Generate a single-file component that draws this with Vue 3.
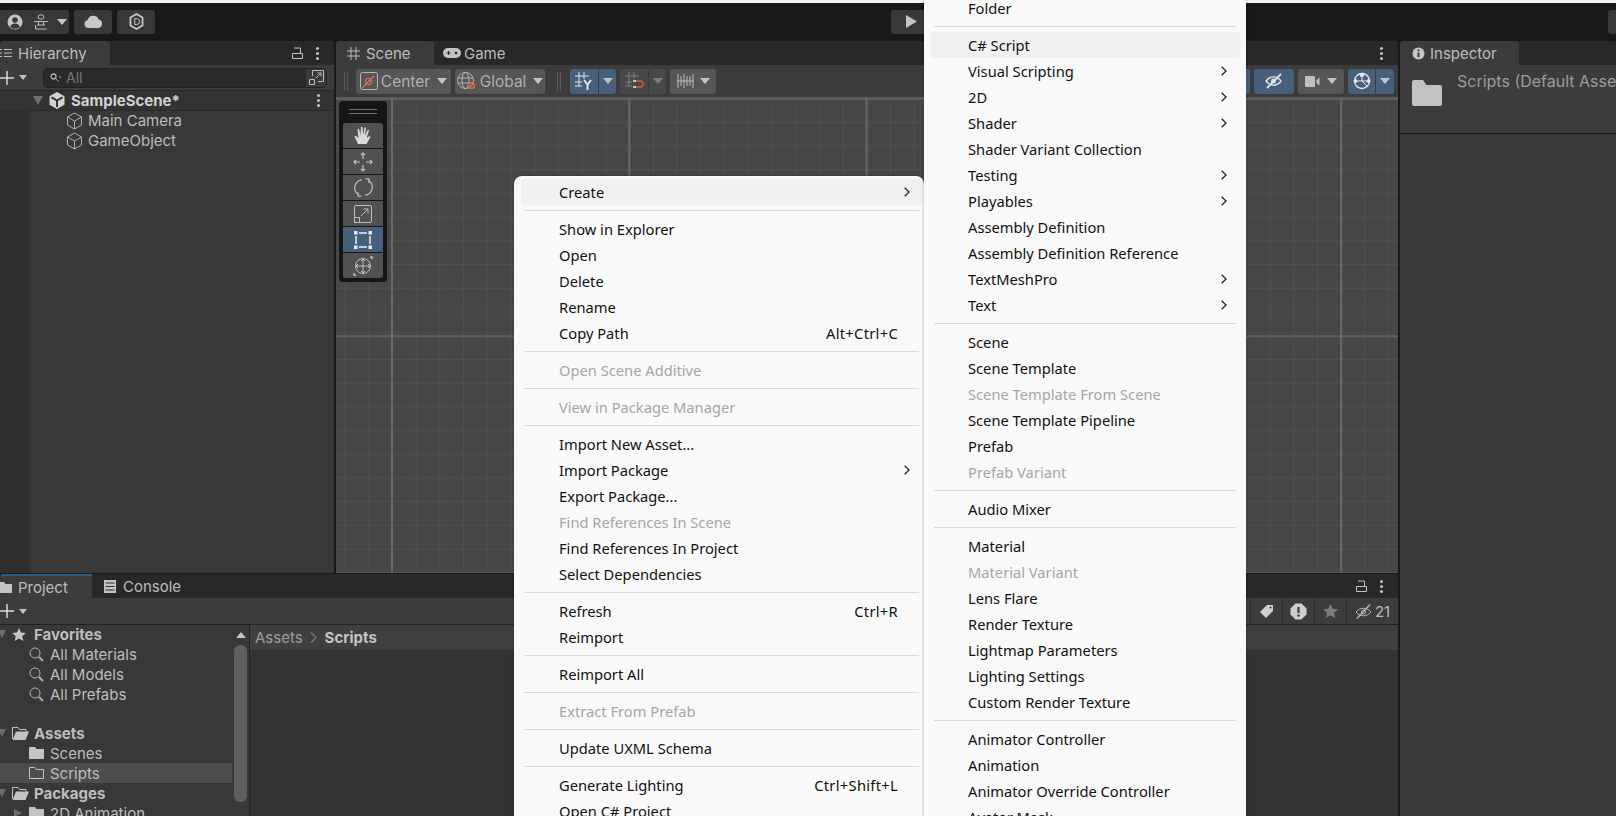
<script setup>
const mainMenu = [
  { label: 'Create', sub: true, hover: true },
  { sep: true },
  { label: 'Show in Explorer' },
  { label: 'Open' },
  { label: 'Delete' },
  { label: 'Rename' },
  { label: 'Copy Path', shortcut: 'Alt+Ctrl+C' },
  { sep: true },
  { label: 'Open Scene Additive', off: true },
  { sep: true },
  { label: 'View in Package Manager', off: true },
  { sep: true },
  { label: 'Import New Asset...' },
  { label: 'Import Package', sub: true },
  { label: 'Export Package...' },
  { label: 'Find References In Scene', off: true },
  { label: 'Find References In Project' },
  { label: 'Select Dependencies' },
  { sep: true },
  { label: 'Refresh', shortcut: 'Ctrl+R' },
  { label: 'Reimport' },
  { sep: true },
  { label: 'Reimport All' },
  { sep: true },
  { label: 'Extract From Prefab', off: true },
  { sep: true },
  { label: 'Update UXML Schema' },
  { sep: true },
  { label: 'Generate Lighting', shortcut: 'Ctrl+Shift+L' },
  { label: 'Open C# Project' }
]

const createMenu = [
  { label: 'Folder' },
  { sep: true },
  { label: 'C# Script', hover: true },
  { label: 'Visual Scripting', sub: true },
  { label: '2D', sub: true },
  { label: 'Shader', sub: true },
  { label: 'Shader Variant Collection' },
  { label: 'Testing', sub: true },
  { label: 'Playables', sub: true },
  { label: 'Assembly Definition' },
  { label: 'Assembly Definition Reference' },
  { label: 'TextMeshPro', sub: true },
  { label: 'Text', sub: true },
  { sep: true },
  { label: 'Scene' },
  { label: 'Scene Template' },
  { label: 'Scene Template From Scene', off: true },
  { label: 'Scene Template Pipeline' },
  { label: 'Prefab' },
  { label: 'Prefab Variant', off: true },
  { sep: true },
  { label: 'Audio Mixer' },
  { sep: true },
  { label: 'Material' },
  { label: 'Material Variant', off: true },
  { label: 'Lens Flare' },
  { label: 'Render Texture' },
  { label: 'Lightmap Parameters' },
  { label: 'Lighting Settings' },
  { label: 'Custom Render Texture' },
  { sep: true },
  { label: 'Animator Controller' },
  { label: 'Animation' },
  { label: 'Animator Override Controller' },
  { label: 'Avatar Mask' }
]

const menus = [
  { id: 'menu-main', items: mainMenu },
  { id: 'menu-create', items: createMenu }
]

const favorites = ['All Materials', 'All Models', 'All Prefabs']
</script>

<template>
  <div class="editor">
    <div class="strip"></div>

    <header class="topbar">
      <div class="top-btn account">
        <svg width="16" height="16" viewBox="0 0 16 16"><circle cx="8" cy="8" r="7.5" fill="#c4c4c4"/><circle cx="8" cy="6" r="2.8" fill="#383838"/><path d="M3 13c1-3 3-3.6 5-3.6s4 .6 5 3.6c-3 2.4-7 2.4-10 0z" fill="#383838"/></svg>
        <svg class="layers" width="14" height="16" viewBox="0 0 14 16" fill="none" stroke="#bdbdbd"><ellipse cx="7" cy="3" rx="3" ry="2.2"/><path d="M0 7.5h14M3 11h8M4.500 7.500V11M9.500 7.500V11M1.500 15h11M1.500 11v4"/></svg>
        <i class="caret"></i>
      </div>
      <div class="top-btn cloud">
        <svg width="19" height="13" viewBox="0 0 19 13"><path d="M4.500 13a4 4 0 0 1-.8-7.900A5.800 5.800 0 0 1 14.800 4.600 4.300 4.300 0 0 1 14.500 13z" fill="#c8c8c8"/></svg>
      </div>
      <div class="top-btn hexa">
        <svg width="15" height="17" viewBox="0 0 15 17" fill="none"><path d="M7.500 1l6 3.500v8l-6 3.500-6-3.500v-8z" stroke="#c8c8c8" stroke-width="1.800"/><path d="M5.800 5.500h1.800a3 3 0 0 1 0 6H5.800z" stroke="#c8c8c8"/></svg>
      </div>
      <div class="top-btn play">
        <svg width="11" height="13" viewBox="0 0 11 13"><path d="M0 0l11 6.500L0 13z" fill="#c4c4c4"/></svg>
      </div>
      <div class="top-btn end"></div>
    </header>

    <div class="workspace">
      <div class="left-stack">
        <div class="upper">
          <section class="panel hierarchy">
            <div class="tabbar">
              <div class="tab hier-tab">
                <svg width="12" height="10" viewBox="0 0 12 10" stroke="#bdbdbd"><path d="M0 1.500h2M0 5h2M0 8.500h2M4 1.500h8M4 5h8M4 8.500h8"/></svg>
                <span>Hierarchy</span>
              </div>
              <div class="tab-tools">
                <svg class="lock" width="11" height="12" viewBox="0 0 11 12" fill="none" stroke="#c4c4c4"><path d="M.5 6.500h10v5H.5zM2 1h6.500v5.500"/></svg>
                <i class="dots"></i>
              </div>
            </div>
            <div class="hier-bar">
              <svg class="plus" width="14" height="14" viewBox="0 0 14 14" stroke="#d8d8d8" stroke-width="1.500"><path d="M0 7h14M7 0v14"/></svg>
              <i class="caret"></i>
              <div class="search">
                <svg width="12" height="10" viewBox="0 0 12 10" fill="none" stroke="#b0b0b0"><circle cx="3.500" cy="3.500" r="2.500" stroke-width="1.300"/><path d="M5.500 5.500L8.500 8.500M9 4h2"/></svg>
                <span>All</span>
                <div class="search-end">
                  <svg width="15" height="15" viewBox="0 0 15 15" fill="none" stroke="#bcbcbc"><path d="M3.500 6V.5h11v11H9M.5 9.500h5v5h-5zM7 8l5-5M8.500 3H12v3.500"/></svg>
                </div>
              </div>
            </div>
            <div class="scene-row">
              <i class="tri-down"></i>
              <svg class="unity" width="16" height="17" viewBox="0 0 16 17"><path d="M8 0l7.500 4.300v8.400L8 17 .5 12.700V4.300z" fill="#d2d2d2"/><path d="M8 8.500V15M8 8.500L2.500 5.300M8 8.500l5.500-3.200" stroke="#333" stroke-width="2"/></svg>
              <span>SampleScene*</span>
              <i class="dots"></i>
            </div>
            <div class="hier-list">
              <div v-for="name in ['Main Camera', 'GameObject']" :key="name" class="hier-item">
                <svg width="17" height="18" viewBox="0 0 17 18" fill="none" stroke="#b0b0b0"><path d="M8.500 1l7 4v8l-7 4-7-4V5zM1.500 5l7 4 7-4M8.500 9v8"/></svg>
                <span>{{ name }}</span>
              </div>
            </div>
          </section>

          <section class="panel scene">
            <div class="tabbar">
              <div class="tab scene-tab">
                <svg width="13" height="13" viewBox="0 0 13 13" stroke="#bdbdbd"><path d="M4 0v13M9 0v13M0 4h13M0 9h13"/></svg>
                <span>Scene</span>
              </div>
              <div class="tab plain game-tab">
                <svg width="18" height="10" viewBox="0 0 18 10"><rect width="18" height="10" rx="5" fill="#c4c4c4"/><path d="M3.500 5h4M5.500 3v4" stroke="#282828"/><circle cx="13" cy="5" r="1.300" fill="#282828"/></svg>
                <span>Game</span>
              </div>
              <div class="tab-tools"><i class="dots"></i></div>
            </div>
            <div class="scene-bar">
              <i class="grip"></i>
              <div class="tbtn center-btn">
                <svg width="18" height="18" viewBox="0 0 18 18" fill="none"><rect x=".5" y=".5" width="17" height="17" rx="2" stroke="#b8b8b8"/><path d="M2 16l12-12" stroke="#b8b8b8"/><circle cx="8.500" cy="9.500" r="3" stroke="#e0653a" stroke-width="1.600"/></svg>
                <span>Center</span><i class="caret"></i>
              </div>
              <div class="tbtn global-btn">
                <svg width="20" height="18" viewBox="0 0 20 18" fill="none" stroke="#b8b8b8"><circle cx="8.500" cy="8.500" r="8"/><ellipse cx="8.500" cy="8.500" rx="3.500" ry="8"/><path d="M1 6h15M1 11h15"/><circle cx="14.500" cy="13.500" r="3" stroke="#e0653a" stroke-width="1.600"/></svg>
                <span>Global</span><i class="caret"></i>
              </div>
              <i class="grip second"></i>
              <div class="tbtn blue snap-a">
                <svg width="20" height="18" viewBox="0 0 20 18" fill="none" stroke="#e2e2e2"><path d="M5 0v14M10 0v7M1 4h14M1 10h7M1 14h7"/><path d="M10 8l3.500 4.500L17 8M13.500 12v6" stroke-width="2"/></svg>
              </div>
              <div class="tbtn blue snap-b"><i class="caret"></i></div>
              <div class="tbtn dim snap-c">
                <svg width="20" height="18" viewBox="0 0 20 18" fill="none" stroke="#7e7e7e"><path d="M5 0v14M10 0v7M1 4h14M1 10h7M1 14h7"/><path d="M12 9h4a3 3 0 0 1 0 6h-4" stroke="#b0583a" stroke-width="2"/><path d="M9 9h3M9 15h3" stroke="#c4c4c4" stroke-width="2"/></svg>
              </div>
              <div class="tbtn dim snap-d"><i class="caret dark"></i></div>
              <div class="tbtn ruler-btn">
                <svg width="17" height="14" viewBox="0 0 17 14" fill="none" stroke="#bcbcbc"><path d="M0 7h17M1 0v14M4 2v10M7 0v14M10 2v10M13 2v10M16 0v14"/></svg>
                <i class="caret"></i>
              </div>
              <div class="bar-right">
                <div class="tbtn blue stub-btn"></div>
                <div class="tbtn blue eye-btn">
                  <svg width="20" height="16" viewBox="0 0 20 16" fill="none" stroke="#e2e2e2"><path d="M2 8c4-5.500 11-5.500 15 0-4 5.500-11 5.500-15 0z" stroke-width="1.400"/><path d="M3 15L17 1" stroke-width="1.800"/><circle cx="9.500" cy="8" r="2.500" fill="#e2e2e2" stroke="none"/></svg>
                </div>
                <div class="tbtn cam-btn">
                  <svg width="16" height="11" viewBox="0 0 16 11"><rect width="10" height="11" rx="1" fill="#c0c0c0"/><path d="M11.500 4l3-2.500v8l-3-2.500z" fill="#c0c0c0"/></svg>
                  <i class="caret"></i>
                </div>
                <div class="giz-group">
                  <div class="tbtn blue giz-a">
                    <svg width="18" height="18" viewBox="0 0 18 18" fill="none" stroke="#e6e6e6"><circle cx="9" cy="9" r="7.500" stroke-width="1.300"/><path d="M2 9h14M9 2v7l5 5"/><circle cx="9" cy="3" r="1.800" fill="#e6e6e6"/><circle cx="2.500" cy="9" r="1.500" fill="#e6e6e6"/><circle cx="15.500" cy="9" r="1.500" fill="#e6e6e6"/></svg>
                  </div>
                  <div class="tbtn blue giz-b"><i class="caret"></i></div>
                </div>
              </div>
            </div>
            <div class="view">
              <div class="overlay">
                <div class="overlay-grip"></div>
                <div class="tool">
                  <svg width="18" height="20" viewBox="0 0 18 20"><path d="M4 18L0.500 10.500l1.200-.8L4.500 12 3.500 3l1.500-.3L6.500 9 7 1h1.500l.7 8 1.300-7.500 1.500.3L11 9.500l2.800-5.800 1.300.6-2.500 7.700 3-2 .9 1-4 7z" fill="#dadada"/></svg>
                </div>
                <div class="tool">
                  <svg width="20" height="20" viewBox="0 0 20 20" fill="none" stroke="#c4c4c4" stroke-width="1.200"><path d="M10 1v6M10 13v6M1 10h6M13 10h6"/><path d="M8 3l2-2 2 2M8 17l2 2 2-2M3 8l-2 2 2 2M17 8l2 2-2 2"/></svg>
                </div>
                <div class="tool">
                  <svg width="19" height="19" viewBox="0 0 19 19" fill="none" stroke="#bdbdbd" stroke-width="1.200"><path d="M4.500 16.500A8 8 0 0 1 8 1.800M14.500 2.500A8 8 0 0 1 11 17.200"/><path d="M11.500 .8h3.500V5M7.500 18.200H4v-4"/></svg>
                </div>
                <div class="tool">
                  <svg width="18" height="18" viewBox="0 0 18 18" fill="none" stroke="#bdbdbd"><rect x=".5" y=".5" width="17" height="17" rx="1.500"/><rect x=".5" y="12.500" width="5" height="5"/><path d="M7 11l7-7M9.500 4H14v4.500"/></svg>
                </div>
                <div class="tool active">
                  <svg width="18" height="18" viewBox="0 0 18 18"><path d="M5 2h8M5 16h8M2 5v8M16 5v8" stroke="#eee" stroke-width="1.500"/><path d="M0 0h3.500v3.500H0zM14.500 0H18v3.500h-3.500zM0 14.500h3.500V18H0zM14.500 14.500H18V18h-3.500z" fill="#eee"/></svg>
                </div>
                <div class="tool">
                  <svg width="20" height="20" viewBox="0 0 20 20" fill="none" stroke="#bdbdbd"><circle cx="10" cy="10" r="7.500"/><path d="M10 3v14M3 10h14"/><path d="M8 5l2-2 2 2M8 15l2 2 2-2M5 8l-2 2 2 2M15 8l2 2-2 2"/><path d="M17 1h2v2M1 17v2h2" stroke-width="1.500"/></svg>
                </div>
              </div>
            </div>
          </section>
        </div>

        <section class="panel project">
          <div class="tabbar">
            <div class="tab project-tab">
              <svg width="13" height="11" viewBox="0 0 13 11"><path d="M0 0h5l1.500 2H13v9H0z" fill="#c4c4c4"/></svg>
              <span>Project</span>
            </div>
            <div class="tab plain console-tab">
              <svg width="12" height="13" viewBox="0 0 12 13"><rect width="12" height="13" fill="#c4c4c4"/><path d="M1.500 3h9M1.500 6.500h9M1.500 10h9" stroke="#282828"/></svg>
              <span>Console</span>
            </div>
            <div class="tab-tools">
              <svg class="lock" width="11" height="12" viewBox="0 0 11 12" fill="none" stroke="#c4c4c4"><path d="M.5 6.500h10v5H.5zM2 1h6.500v5.500"/></svg>
              <i class="dots"></i>
            </div>
          </div>
          <div class="project-bar">
            <svg class="plus" width="14" height="14" viewBox="0 0 14 14" stroke="#d8d8d8" stroke-width="1.500"><path d="M0 7h14M7 0v14"/></svg>
            <i class="caret small"></i>
            <div class="filter-cells">
              <div class="cell">
                <svg width="14" height="14" viewBox="0 0 14 14"><path d="M7 1h6v6l-7 7-6-6z" fill="#d0d0d0"/><circle cx="10.500" cy="3.500" r="1.100" fill="#3c3c3c"/></svg>
              </div>
              <div class="cell">
                <svg width="17" height="17" viewBox="0 0 17 17"><path d="M5.500.5h6l5 5v6l-5 5h-6l-5-5v-6z" fill="#d0d0d0"/><path d="M8.500 4v6" stroke="#3c3c3c" stroke-width="2.200"/><circle cx="8.500" cy="12.500" r="1.200" fill="#3c3c3c"/></svg>
              </div>
              <div class="cell">
                <svg width="15" height="14" viewBox="0 0 15 14"><path d="M7.500 0l2.200 4.800 5.300.5-4 3.500 1.200 5.200-4.700-2.800L2.800 14 4 8.800 0 5.300l5.300-.5z" fill="#7d7d7d"/></svg>
              </div>
              <div class="cell last">
                <svg width="18" height="15" viewBox="0 0 18 15" fill="none" stroke="#bcbcbc"><path d="M1 8c4-5 11-5 15 0-4 5-11 5-15 0z"/><path d="M2 14.500L15 .5" stroke-width="1.300"/><circle cx="8.500" cy="8" r="2"/></svg>
                <span>21</span>
              </div>
            </div>
          </div>
          <div class="project-body">
            <aside class="tree">
              <div class="tree-list">
                <div class="tree-row head fav">
                  <i class="tree-tri"></i>
                  <svg width="14" height="13" viewBox="0 0 15 14"><path d="M7.500 0l2.200 4.800 5.300.5-4 3.500 1.200 5.200-4.700-2.800L2.800 14 4 8.800 0 5.300l5.300-.5z" fill="#c4c4c4"/></svg>
                  <span>Favorites</span>
                </div>
                <div v-for="name in favorites" :key="name" class="tree-row child">
                  <svg width="15" height="15" viewBox="0 0 15 15" fill="none" stroke="#b4b4b4"><circle cx="6" cy="6" r="5"/><path d="M10 10l4 4" stroke-width="1.800"/></svg>
                  <span>{{ name }}</span>
                </div>
                <div class="tree-row spacer"></div>
                <div class="tree-row head">
                  <i class="tree-tri"></i>
                  <svg width="17" height="13" viewBox="0 0 17 13"><path d="M1 12l3-7.500h13L13.500 13H1z" fill="#c4c4c4"/><path d="M.5 12V.5h5.500l1.500 2h6.500v2" fill="none" stroke="#c4c4c4"/></svg>
                  <span>Assets</span>
                </div>
                <div class="tree-row child">
                  <svg width="15" height="12" viewBox="0 0 15 12"><path d="M0 0h6l1.500 2H15v10H0z" fill="#c4c4c4"/></svg>
                  <span>Scenes</span>
                </div>
                <div class="tree-row child selected">
                  <svg width="15" height="12" viewBox="0 0 15 12" fill="none" stroke="#c4c4c4"><path d="M.5.5h5.300l1.500 2h7.200v9H.5z"/></svg>
                  <span>Scripts</span>
                </div>
                <div class="tree-row head">
                  <i class="tree-tri"></i>
                  <svg width="17" height="13" viewBox="0 0 17 13"><path d="M1 12l3-7.500h13L13.500 13H1z" fill="#c4c4c4"/><path d="M.5 12V.5h5.500l1.500 2h6.500v2" fill="none" stroke="#c4c4c4"/></svg>
                  <span>Packages</span>
                </div>
                <div class="tree-row pkg">
                  <i class="tree-side"></i>
                  <svg width="15" height="12" viewBox="0 0 15 12"><path d="M0 0h6l1.500 2H15v10H0z" fill="#c4c4c4"/></svg>
                  <span>2D Animation</span>
                </div>
              </div>
              <div class="scroll">
                <i class="scroll-up"></i>
                <i class="scroll-thumb"></i>
              </div>
            </aside>
            <div class="assets">
              <div class="crumbs">
                <span>Assets</span>
                <svg width="8" height="11" viewBox="0 0 8 11" fill="none" stroke="#777" stroke-width="1.300"><path d="M1 .5l5 5-5 5"/></svg>
                <b>Scripts</b>
              </div>
            </div>
          </div>
        </section>
      </div>

      <section class="panel inspector">
        <div class="tabbar">
          <div class="tab insp-tab">
            <svg width="13" height="13" viewBox="0 0 13 13"><circle cx="6.500" cy="6.500" r="6" fill="#c8c8c8"/><path d="M6.500 5.500v4.500" stroke="#3c3c3c" stroke-width="2"/><circle cx="6.500" cy="3.300" r="1.100" fill="#3c3c3c"/></svg>
            <span>Inspector</span>
          </div>
        </div>
        <div class="insp-head">
          <svg width="30" height="26" viewBox="0 0 30 26"><path d="M0 2a2 2 0 0 1 2-2h9l3.500 5H28a2 2 0 0 1 2 2v17a2 2 0 0 1-2 2H2a2 2 0 0 1-2-2z" fill="#c2c2c2"/></svg>
          <span>Scripts (Default Asset) Import Settings</span>
        </div>
      </section>
    </div>

    <!-- context menus float above the panels -->
    <div v-for="menu in menus" :key="menu.id" class="menu" :class="menu.id">
      <template v-for="(item, i) in menu.items" :key="i">
        <div v-if="item.sep" class="menu-sep"></div>
        <div v-else class="menu-item" :class="{ hover: item.hover, off: item.off }">
          <span class="menu-label">{{ item.label }}</span>
          <span v-if="item.shortcut" class="menu-key">{{ item.shortcut }}</span>
          <svg v-if="item.sub" class="menu-chevron" width="6" height="10" viewBox="0 0 6 10" fill="none" stroke="#222" stroke-width="1.300"><path d="M.7.7L5 5 .7 9.300"/></svg>
        </div>
      </template>
    </div>
  </div>
</template>

<style scoped>
.editor {
  position: relative;
  display: flex;
  flex-direction: column;
  width: 1616px;
  height: 816px;
  overflow: hidden;
  background: #191919;
  color: #bdbdbd;
  font-family: Inter, "Noto Sans", sans-serif;
  font-size: 15px;
}

svg {
  flex: none;
}

.strip {
  flex: none;
  height: 3px;
  background: #f4f4f4;
}

.topbar {
  flex: none;
  display: flex;
  align-items: center;
  height: 38px;
  gap: 5px;
}

.top-btn {
  display: flex;
  align-items: center;
  justify-content: center;
  height: 24px;
  margin-top: -1px;
  border-radius: 3px;
  background: #383838;
}

.account {
  width: 69px;
  gap: 11px;
  padding-left: 4px;
  box-sizing: border-box;
  border-radius: 0 3px 3px 0;
}

.account .caret {
  margin-left: -2px;
}

.cloud,
.hexa {
  width: 38px;
}

.play {
  width: 40px;
  margin-left: 731px;
}

.end {
  width: 20px;
  margin-left: auto;
  margin-right: -12px;
}

.caret {
  display: block;
  flex: none;
  width: 0;
  height: 0;
  border-left: 5px solid transparent;
  border-right: 5px solid transparent;
  border-top: 6px solid #c4c4c4;
}

.caret.small {
  border-left-width: 4px;
  border-right-width: 4px;
  border-top-width: 5px;
}

.caret.dark {
  border-top-color: #7d7d7d;
}

.workspace {
  flex: 1;
  display: flex;
  gap: 2px;
  min-height: 0;
}

.left-stack {
  display: flex;
  flex-direction: column;
  width: 1398px;
  flex: none;
  gap: 1px;
}

.upper {
  display: flex;
  flex: none;
  height: 532px;
  gap: 2px;
}

.panel {
  display: flex;
  flex-direction: column;
  background: #383838;
  min-width: 0;
  overflow: hidden;
  border-radius: 4px 4px 0 0;
}

.tabbar {
  flex: none;
  display: flex;
  height: 24px;
  background: #282828;
}

.tab {
  display: flex;
  align-items: center;
  height: 24px;
  gap: 6px;
  background: #3c3c3c;
  color: #bdbdbd;
  box-sizing: border-box;
  border-radius: 3px 3px 0 0;
  white-space: nowrap;
  flex: none;
}

.tab.plain {
  background: transparent;
  border-radius: 0;
}

.tab-tools {
  display: flex;
  align-items: center;
  gap: 13px;
  margin-left: auto;
  padding-right: 15px;
}

.dots {
  position: relative;
  display: block;
  width: 3px;
  height: 3px;
  border-radius: 50%;
  background: #c4c4c4;
  box-shadow: 0 -5px 0 #c4c4c4, 0 5px 0 #c4c4c4;
}

.hierarchy {
  width: 334px;
  flex: none;
}

.hier-tab {
  width: 110px;
  padding-left: 0;
}

.hier-bar {
  flex: none;
  display: flex;
  align-items: center;
  height: 26px;
  box-sizing: border-box;
  background: #3c3c3c;
  border-bottom: 1px solid #262626;
}

.hier-bar .caret {
  margin-left: 5px;
  border-left-width: 4.500px;
  border-right-width: 4.500px;
  border-top-width: 5px;
}

.search {
  display: flex;
  align-items: center;
  gap: 4px;
  width: 284px;
  height: 20px;
  margin-left: 16px;
  padding-left: 6px;
  box-sizing: border-box;
  border: 1px solid #212121;
  border-radius: 5px;
  background: #2a2a2a;
  color: #767676;
  font-size: 14px;
}

.search-end {
  display: flex;
  align-items: center;
  justify-content: center;
  width: 20px;
  height: 18px;
  margin-left: auto;
  background: #3a3a3a;
  border-radius: 0 4px 4px 0;
}

.scene-row {
  flex: none;
  display: flex;
  align-items: center;
  height: 20px;
  box-sizing: border-box;
  background: #333;
  border-bottom: 1px solid #2a2a2a;
  color: #d2d2d2;
  font-weight: 700;
}

.tri-down {
  width: 0;
  height: 0;
  margin-left: 33px;
  border-left: 5px solid transparent;
  border-right: 5px solid transparent;
  border-top: 9px solid #6e6e6e;
}

.unity {
  margin-left: 6px;
  margin-right: 6px;
}

.scene-row .dots {
  margin-left: auto;
  margin-right: 14px;
}

.hier-list {
  flex: 1;
  border-left: 30px solid #2f2f2f;
}

.hier-item {
  display: flex;
  align-items: center;
  gap: 5px;
  height: 20px;
  padding-left: 36px;
  line-height: 18px;
}

.scene {
  flex: 1;
}

.scene-tab {
  width: 98px;
  padding-left: 11px;
  gap: 6px;
}

.game-tab {
  padding-left: 9px;
  gap: 3px;
}

.scene-bar {
  flex: none;
  display: flex;
  align-items: center;
  height: 33px;
  padding-left: 8px;
  background: #3c3c3c;
  border-bottom: 1px solid #5a5a5a;
  box-sizing: border-box;
}

.grip {
  flex: none;
  width: 4px;
  height: 19px;
  border-left: 1px solid #5a5a5a;
  border-right: 1px solid #5a5a5a;
  box-sizing: border-box;
}

.grip.second {
  margin-left: 12px;
}

.tbtn {
  flex: none;
  display: flex;
  align-items: center;
  justify-content: center;
  height: 25px;
  gap: 3px;
  border-radius: 3px;
  background: #565656;
  box-sizing: border-box;
  color: #b0b0b0;
  font-size: 15.500px;
}

.tbtn.blue {
  background: #46607c;
}

.tbtn.dim {
  background: #484848;
}

.center-btn {
  width: 95px;
  margin-left: 8px;
}

.center-btn .caret,
.global-btn .caret {
  margin-left: 4px;
}

.global-btn {
  width: 90px;
  margin-left: 4px;
}

.snap-a {
  width: 28px;
  margin-left: 9px;
  border-radius: 3px 0 0 3px;
}

.snap-b {
  width: 17px;
  margin-left: 1px;
  border-radius: 0 3px 3px 0;
}

.snap-c {
  width: 28px;
  margin-left: 4px;
  border-radius: 3px 0 0 3px;
}

.snap-d {
  width: 17px;
  margin-left: 1px;
  border-radius: 0 3px 3px 0;
}

.ruler-btn {
  width: 46px;
  margin-left: 4px;
  gap: 6px;
}

.bar-right {
  display: flex;
  gap: 4px;
  margin-left: auto;
  padding-right: 4px;
}

.stub-btn {
  width: 40px;
}

.eye-btn {
  width: 40px;
}

.cam-btn {
  width: 46px;
  gap: 6px;
}

.giz-group {
  display: flex;
  gap: 1px;
}

.giz-a {
  width: 27px;
  border-radius: 3px 0 0 3px;
}

.giz-b {
  width: 18px;
  border-radius: 0 3px 3px 0;
}

.view {
  position: relative;
  flex: 1;
  background-color: #474747;
  background-image:
    linear-gradient(to right, #686868 2px, transparent 2px),
    linear-gradient(to bottom, #5e5e5e 2px, transparent 2px),
    linear-gradient(to right, #505050 1px, transparent 1px),
    linear-gradient(to bottom, #505050 1px, transparent 1px);
  background-size: 237.300px 237.300px, 237.300px 237.300px, 23.730px 23.730px, 23.730px 23.730px;
  background-position: 55px 0, 0 0, 8.500px 0, 0 0;
}

.overlay {
  position: absolute;
  left: 3px;
  top: 3px;
  display: flex;
  flex-direction: column;
  gap: 1px;
  width: 48px;
  height: 181px;
  padding: 0 4px;
  box-sizing: border-box;
  border-radius: 4px;
  background: #151515;
}

.overlay-grip {
  flex: none;
  height: 5px;
  margin: 8px 6px 8px;
  box-sizing: border-box;
  border-top: 1px solid #707070;
  border-bottom: 1px solid #707070;
}

.tool {
  flex: none;
  display: flex;
  align-items: center;
  justify-content: center;
  height: 25px;
  background: #515151;
}

.tool:nth-child(2) {
  border-radius: 3px 3px 0 0;
}

.tool:last-child {
  border-radius: 0 0 3px 3px;
}

.tool.active {
  background: #46607c;
}

.project {
  flex: 1;
}

.project-tab {
  width: 92px;
  padding-left: 0;
  gap: 6px;
  border-top: 2px solid #2c5d87;
  border-radius: 0;
}

.project-tab svg {
  margin-left: -1px;
}

.console-tab {
  padding-left: 12px;
  gap: 7px;
}

.project-bar {
  flex: none;
  display: flex;
  align-items: center;
  height: 27px;
  box-sizing: border-box;
  background: #3c3c3c;
  border-bottom: 1px solid #232323;
}

.project-bar .caret {
  margin-left: 5px;
}

.filter-cells {
  display: flex;
  margin-left: auto;
  height: 100%;
}

.cell {
  display: flex;
  align-items: center;
  justify-content: center;
  width: 32px;
  border-left: 1px solid #2b2b2b;
  box-sizing: border-box;
}

.cell.last {
  width: 52px;
  gap: 2px;
}

.project-body {
  flex: 1;
  display: flex;
  min-height: 0;
}

.tree {
  flex: none;
  display: flex;
  width: 249px;
  border-right: 1px solid #262626;
}

.tree-list {
  width: 232px;
  flex: none;
  margin-top: -1px;
}

.tree-row {
  display: flex;
  align-items: center;
  height: 20px;
  white-space: nowrap;
}

.head {
  position: relative;
  gap: 5px;
  font-weight: 700;
  padding-left: 12px;
}

.fav {
  gap: 8px;
}

.tree-tri {
  position: absolute;
  left: -2px;
  width: 0;
  height: 0;
  border-left: 4px solid transparent;
  border-right: 4px solid transparent;
  border-top: 8px solid #6e6e6e;
}

.child {
  gap: 6px;
  padding-left: 29px;
}

.spacer {
  height: 19px;
}

.selected {
  background: #4d4d4d;
}

.pkg {
  gap: 6px;
  padding-left: 14px;
}

.tree-side {
  width: 0;
  height: 0;
  border-top: 4.500px solid transparent;
  border-bottom: 4.500px solid transparent;
  border-left: 8px solid #6e6e6e;
  margin-right: 1px;
}

.scroll {
  position: relative;
  flex: 1;
}

.scroll-up {
  position: absolute;
  top: 7px;
  left: 4px;
  width: 0;
  height: 0;
  border-left: 5px solid transparent;
  border-right: 5px solid transparent;
  border-bottom: 6px solid #c4c4c4;
}

.scroll-thumb {
  position: absolute;
  top: 20px;
  left: 2px;
  width: 13px;
  height: 157px;
  border-radius: 6px;
  background: #5f5f5f;
}

.assets {
  flex: 1;
  background: #333;
}

.crumbs {
  display: flex;
  align-items: center;
  gap: 7px;
  height: 25px;
  padding-left: 5px;
  background: #3f3f3f;
  color: #9f9f9f;
}

.crumbs b {
  color: #c4c4c4;
  font-weight: 700;
}

.inspector {
  flex: 1;
}

.insp-tab {
  width: 119px;
  padding-left: 12px;
  gap: 5px;
}

.insp-head {
  flex: none;
  display: flex;
  height: 69px;
  padding: 15px 0 0 12px;
  box-sizing: border-box;
  background: #3c3c3c;
  border-bottom: 1px solid #1c1c1c;
  gap: 15px;
  color: #9d9d9d;
  font-size: 16px;
  white-space: nowrap;
}

.insp-head span {
  margin-top: -9px;
}

.menu {
  position: absolute;
  box-sizing: border-box;
  padding: 3px 0;
  background: #f9f9f9;
  color: #111;
  font-family: "Noto Sans", sans-serif;
  font-size: 14.700px;
  box-shadow: 0 0 3px rgba(0, 0, 0, 0.3);
}

.menu-main {
  left: 514px;
  top: 176px;
  width: 410px;
  border-radius: 8px 8px 0 0;
}

.menu-create {
  left: 924px;
  top: -8.500px;
  width: 322px;
}

.menu-item {
  position: relative;
  display: flex;
  align-items: center;
  height: 26px;
  margin: 0 1px 0 7px;
  padding-left: 38px;
  border-radius: 4px;
}

.menu-create .menu-item {
  margin: 0 6px;
}

.menu-item.hover {
  background: #f0f0f0;
}

.menu-item.off {
  color: #a6a6a6;
}

.menu-key {
  position: absolute;
  right: 25px;
  letter-spacing: 0.300px;
}

.menu-chevron {
  position: absolute;
  right: 13px;
}

.menu-sep {
  height: 1px;
  margin: 5px 5px 5px 11px;
  background: #d8d8d8;
}

.menu-create .menu-sep {
  margin-left: 10px;
  margin-right: 10px;
}
</style>

<style>
html,
body {
  margin: 0;
  background: #191919;
}
</style>
